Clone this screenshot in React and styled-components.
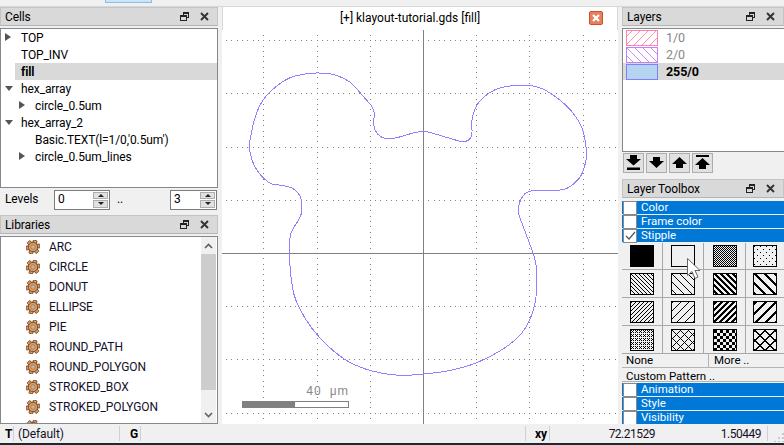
import React from 'react';
import styled, { createGlobalStyle } from 'styled-components';

const Global = createGlobalStyle`
  html, body { margin: 0; padding: 0; background: #f0f0f0; overflow: hidden; }
  * { box-sizing: border-box; }
  body { font-family: Roboto, "Noto Sans", sans-serif; font-size: 12px; letter-spacing: -0.1px; line-height: 15px; color: #000; }
`;

const Page = styled.div`
  width: 784px;
  height: 445px;
  display: flex;
  flex-direction: column;
  background: #f0f0f0;
  border-bottom: 2px solid #1c2a30;
`;

const TopStrip = styled.div`
  height: 7px;
  flex: none;
  padding-left: 105px;
  border-bottom: 1px solid #d8d8d8;
`;

const TopButton = styled.div`
  width: 47px;
  height: 3px;
  background: #cce4f7;
  border: 1px solid #8cbce8;
  border-top: 0;
`;

const Main = styled.div`
  flex: 1;
  min-height: 0;
  display: grid;
  grid-template-columns: 218px 396px 162px;
  column-gap: 4px;
`;

const Column = styled.div`
  display: flex;
  flex-direction: column;
  min-height: 0;
`;

const DockTitle = styled.div`
  height: 19px;
  flex: none;
  display: flex;
  align-items: center;
  padding: 0 8px 0 4px;
  background: #d9d9d9;
  border: 1px solid #c4c4c4;
  border-bottom-color: #b4b4b4;
  span { flex: 1; line-height: 17px; padding-top: 2px; }
  svg { display: block; margin-left: 11px; }
`;

const FloatIcon = () => (
  <svg width="9" height="9" viewBox="0 0 9 9" shapeRendering="crispEdges">
    <path d="M3 .5h5.500v5H6.500M3 .5v2M3 1.500h5.500" fill="none" stroke="#222" />
    <path d="M.5 3h6v5.500h-6zM.5 4h6" fill="none" stroke="#222" />
  </svg>
);

const CloseIcon = () => (
  <svg width="9" height="9" viewBox="0 0 9 9">
    <path d="M1 1l7 7M8 1l-7 7" stroke="#333" strokeWidth="1.9" />
  </svg>
);

const Dock = ({ title }) => (
  <DockTitle>
    <span>{title}</span>
    <FloatIcon />
    <CloseIcon />
  </DockTitle>
);

const TreeBox = styled.div`
  height: 160px;
  flex: none;
  margin-top: 2px;
  background: #fff;
  border: 1px solid #828790;
`;

const TreeRow = styled.div`
  height: 17px;
  display: flex;
  align-items: center;
  position: relative;
  padding-top: 1px;
  padding-left: ${p => 20 + p.$depth * 14}px;
  font-weight: ${p => (p.$selected ? 700 : 400)};
  background: ${p =>
    p.$selected ? 'linear-gradient(90deg, #fff 14px, #d9d9d9 14px)' : 'transparent'};
`;

const Arrow = styled.i`
  position: absolute;
  left: ${p => 4 + p.$depth * 14}px;
  top: ${p => (p.$open ? 6 : 4)}px;
  width: 0;
  height: 0;
  border-style: solid;
  border-color: transparent;
  ${p =>
    p.$open
      ? 'border-width: 5px 4px 0 4px; border-top-color: #555;'
      : 'border-width: 4px 0 4px 6px; border-left-color: #555;'}
`;

const cells = [
  { name: 'TOP', depth: 0, arrow: 'closed' },
  { name: 'TOP_INV', depth: 0 },
  { name: 'fill', depth: 0, selected: true },
  { name: 'hex_array', depth: 0, arrow: 'open' },
  { name: 'circle_0.5um', depth: 1, arrow: 'closed' },
  { name: 'hex_array_2', depth: 0, arrow: 'open' },
  { name: "Basic.TEXT(l=1/0,'0.5um')", depth: 1 },
  { name: 'circle_0.5um_lines', depth: 1, arrow: 'closed' },
];

const LevelsRow = styled.div`
  height: 21px;
  flex: none;
  margin-top: 1px;
  display: flex;
  align-items: center;
  padding-left: 5px;
`;

const LevelsLabel = styled.span`
  width: 49px;
`;

const DotDot = styled.span`
  width: 60px;
  padding-left: 7px;
`;

const Spin = styled.div`
  width: ${p => p.$w}px;
  height: 20px;
  display: flex;
  align-items: center;
  justify-content: space-between;
  background: #fff;
  border: 1px solid #7a7a7a;
  padding: 1px 1px 1px 3px;
`;

const SpinButtons = styled.div`
  width: 15px;
  height: 16px;
  display: flex;
  flex-direction: column;
  gap: 1px;
`;

const SpinButton = styled.div`
  flex: 1;
  background: #e1e1e1;
  border: 1px solid #adadad;
  display: flex;
  align-items: center;
  justify-content: center;
  &::after {
    content: '';
    border-style: solid;
    border-color: transparent;
    border-width: ${p => (p.$up ? '0 3px 3px 3px' : '3px 3px 0 3px')};
    ${p => (p.$up ? 'border-bottom-color: #222;' : 'border-top-color: #222;')}
  }
`;

const SpinBox = ({ value, w }) => (
  <Spin $w={w}>
    {value}
    <SpinButtons>
      <SpinButton $up />
      <SpinButton />
    </SpinButtons>
  </Spin>
);

const LibraryBox = styled.div`
  flex: 1;
  min-height: 0;
  margin-top: 2px;
  display: flex;
  background: #fff;
  border: 1px solid #828790;
  overflow: hidden;
`;

const LibraryList = styled.div`
  flex: 1;
  overflow: hidden;
`;

const LibraryRow = styled.div`
  height: 20px;
  flex: none;
  display: flex;
  align-items: center;
  gap: 9px;
  padding-left: 25px;
  color: #14102a;
  span { padding-top: 1px; }
`;

const Scrollbar = styled.div`
  width: 15px;
  flex: none;
  margin-right: 1px;
  display: flex;
  flex-direction: column;
  background: #f0f0f0;
`;

const ScrollArrow = styled.div`
  height: 17px;
  flex: none;
  display: flex;
  align-items: center;
  justify-content: center;
  &:last-child { margin-top: auto; }
`;

const ScrollThumb = styled.div`
  height: 136px;
  flex: none;
  background: #cdcdcd;
`;

const Chevron = ({ up }) => (
  <svg width="9" height="6" viewBox="0 0 9 6">
    <path d={up ? 'M1 5l3.500-3.500L8 5' : 'M1 1l3.500 3.500L8 1'} fill="none" stroke="#606060" strokeWidth="1.6" />
  </svg>
);

const Gear = () => (
  <svg width="14" height="14" viewBox="-7 -7 14 14">
    {[0, 60, 120, 180, 240, 300].map(a => (
      <rect key={a} x="-1.9" y="-7" width="3.8" height="3.6" rx=".5" fill="#e99a50" stroke="#5b4030" strokeWidth=".8" transform={`rotate(${a + 20})`} />
    ))}
    <circle r="4.7" fill="#e99a50" stroke="#5b4030" strokeWidth=".8" />
    <circle r="2.3" fill="#b9b3aa" stroke="#8a6a4a" strokeWidth=".6" />
  </svg>
);

const libraries = [
  'ARC', 'CIRCLE', 'DONUT', 'ELLIPSE', 'PIE', 'ROUND_PATH',
  'ROUND_POLYGON', 'STROKED_BOX', 'STROKED_POLYGON', '',
];

/* center view */
const ViewHead = styled.div`
  height: 23px;
  flex: none;
  display: flex;
  align-items: center;
  justify-content: center;
  position: relative;
  padding-right: 20px;
  background: #fff;
  border-left: 1px solid #d8d8d8;
  border-right: 1px solid #d8d8d8;
  letter-spacing: 0;
`;

const ViewClose = styled.div`
  position: absolute;
  right: 14px;
  top: 4px;
  width: 14px;
  height: 14px;
  display: flex;
  align-items: center;
  justify-content: center;
  background: #e5805c;
  border: 1px solid #d84a32;
  border-radius: 2px;
`;

const Canvas = styled.div`
  flex: 1;
  min-height: 0;
  position: relative;
  background: #fff;
  svg { display: block; }
`;

const Scale = styled.div`
  position: absolute;
  left: 20px;
  top: 353px;
  width: 107px;
  color: #888;
  letter-spacing: 1px;
  text-align: right;
  line-height: 17px;
`;

const ScaleTrack = styled.div`
  height: 7px;
  margin-top: 1px;
  background: linear-gradient(90deg, #808080 50%, #fff 50%);
  border: 1px solid #808080;
`;

// outline traced from the picture, 3x page coordinates
const outline = [
  [238, 640], [238, 600], [225, 575], [205, 562], [180, 556], [150, 552], [125, 535], [105, 510], [90, 480],
  [82, 440], [88, 400], [100, 350], [120, 305], [150, 270], [200, 235], [250, 222], [290, 219], [340, 225],
  [385, 247], [420, 285], [450, 320], [457, 340], [455, 375], [465, 400], [485, 414], [520, 414], [570, 400],
  [605, 394], [640, 402], [690, 417], [725, 425], [745, 415], [750, 395], [750, 360], [765, 315], [800, 280],
  [840, 262], [900, 256], [950, 262], [1000, 290], [1050, 335], [1080, 385], [1092, 440], [1092, 480],
  [1075, 530], [1035, 565], [1000, 571], [935, 572], [910, 580], [892, 610], [890, 640], [902, 675],
  [915, 710], [935, 765], [944, 810], [942, 890], [925, 955], [890, 1010], [830, 1055], [760, 1090],
  [680, 1112], [605, 1122], [530, 1126], [450, 1113], [380, 1085], [320, 1040], [270, 985], [235, 930],
  [215, 880], [205, 810], [202, 740], [207, 700], [228, 662],
].map(([x, y]) => [x / 3, y / 3 - 30]);

const smoothPath = pts => {
  const n = pts.length;
  let d = `M${pts[0][0]} ${pts[0][1]}`;
  for (let i = 0; i < n; i++) {
    const p0 = pts[(i - 1 + n) % n];
    const p1 = pts[i];
    const p2 = pts[(i + 1) % n];
    const p3 = pts[(i + 2) % n];
    d += `C${p1[0] + (p2[0] - p0[0]) / 6} ${p1[1] + (p2[1] - p0[1]) / 6} ${p2[0] - (p3[0] - p1[0]) / 6} ${p2[1] - (p3[1] - p1[1]) / 6} ${p2[0]} ${p2[1]}`;
  }
  return d + 'Z';
};

const gridDots = () => {
  const ox = 201;
  const oy = 223;
  const step = 53.2;
  const sub = step / 10;
  let d = '';
  const dot = (x, y) => {
    if (x < 3 || x > 393 || y < 2 || y > 392) return;
    d += `M${Math.round(x)} ${Math.round(y)}h1v1h-1z`;
  };
  for (let k = -5; k <= 5; k++) {
    if (k === 0) continue;
    for (let i = -45; i <= 45; i++) {
      dot(ox + k * step, oy + i * sub); // vertical lines
      if (i !== 0) dot(ox + i * sub, oy + k * step); // horizontal lines
    }
  }
  return d;
};

/* layers */
const LayerBox = styled.div`
  height: 124px;
  flex: none;
  margin-top: 2px;
  background: #fff;
  border: 1px solid #828790;
  border-right: 0;
`;

const LayerRow = styled.div`
  height: 17px;
  display: flex;
  align-items: center;
  padding-left: 3px;
  gap: 8px;
  font-size: 12.5px;
  font-weight: ${p => (p.$selected ? 700 : 400)};
  color: ${p => (p.$selected ? '#000' : '#888')};
  background: ${p => (p.$selected ? '#d9d9d9' : 'transparent')};
`;

const LayerSwatch = styled.svg`
  display: block;
  flex: none;
`;

const hatch = (dir, step) => {
  let d = '';
  for (let i = -16; i < 34; i += step) {
    d += dir > 0 ? `M${i} 15L${i + 15} 0` : `M${i} 0L${i + 15} 15`;
  }
  return d;
};

const LayerSwatchIcon = ({ color, fill, dir }) => (
  <LayerSwatch width="32" height="16" viewBox="0 0 32 16">
    <defs>
      <clipPath id={`sw${color.slice(1)}`}><rect x="1" y="1" width="30" height="14" /></clipPath>
    </defs>
    <rect x=".5" y=".5" width="31" height="15" fill={fill || '#fff'} stroke={color} />
    {dir ? <path d={hatch(dir, 8)} stroke={color} fill="none" strokeWidth=".9" clipPath={`url(#sw${color.slice(1)})`} /> : null}
  </LayerSwatch>
);

const MoveBar = styled.div`
  height: 20px;
  flex: none;
  margin-top: 1px;
  display: flex;
  gap: 2px;
  padding-left: 1px;
`;

const MoveButton = styled.div`
  width: 21px;
  height: 20px;
  display: flex;
  align-items: center;
  justify-content: center;
  background: #e1e1e1;
  border: 1px solid #adadad;
`;

const moves = [
  'M5 0h7v4h4l-7.500 6.500L1 4h4zM2 12.500h13v2.500H2z',
  'M5 2h7v4h4l-7.500 7L1 6h4z',
  'M8.500 2L16 9h-4v4H5V9H1z',
  'M2 0h13v2H2zM8.500 3L16 10h-4v4H5v-4H1z',
];

const Spacer = styled.div`
  height: ${p => p.$h}px;
  flex: none;
`;

const Band = styled.div`
  height: 13px;
  flex: none;
  margin-top: 1px;
  display: flex;
  align-items: center;
  background: #0078d7;
  color: #fff;
  font-size: 11.5px;
  letter-spacing: 0;
  line-height: 12px;
`;

const BandLabel = styled.span`
  margin-top: -2px;
`;

const BandCheck = styled.div`
  width: 14px;
  height: 14px;
  flex: none;
  margin: 0 4px 0 1px;
  background: #fff;
  border: 1px solid #8a8a8a;
  display: flex;
  align-items: center;
  justify-content: center;
`;

const StippleGrid = styled.div`
  flex: none;
  display: grid;
  grid-template-columns: 41px 41px 42px 38px;
  grid-template-rows: 27px repeat(3, 28px);
  position: relative;
  margin-top: 1px;
`;

const StippleCell = styled.div`
  display: flex;
  align-items: center;
  justify-content: center;
  border-right: 1px solid #a8a8a8;
  border-bottom: 1px solid #a8a8a8;
  &:nth-child(4n) { border-right: 0; }
`;

const StippleSwatch = styled.svg`
  display: block;
`;

const Pointer = styled.svg`
  position: absolute;
  left: 65px;
  top: 15px;
`;

const mod = (a, b) => ((a % b) + b) % b;

const stipples = [
  () => true,
  () => false,
  (x, y) => (x + y) % 2 === 0,
  (x, y) => (x % 6 === 0 && y % 6 === 0) || (x % 6 === 3 && y % 6 === 3),
  (x, y) => mod(x - y, 4) === 0,
  (x, y) => mod(x - y, 8) === 0,
  (x, y) => mod(x - y, 6) < 3,
  (x, y) => mod(x - y, 10) < 3,
  (x, y) => mod(x + y, 4) === 0,
  (x, y) => mod(x + y, 8) === 0,
  (x, y) => mod(x + y, 6) < 3,
  (x, y) => mod(x + y, 10) < 3,
  (x, y) => (x % 2 === 0 && y % 2 === 0) || (x % 4 === 1 && y % 4 === 1),
  (x, y) => mod(x + y, 8) === 0 || mod(x - y, 8) === 0,
  (x, y) => (Math.floor(x / 3) + Math.floor(y / 3)) % 2 === 0,
  (x, y) => mod(x + y, 10) < 2 || mod(x - y, 10) < 2,
];

const stipplePath = fn => {
  let d = '';
  for (let y = 0; y < 20; y++) {
    for (let x = 0; x < 22; x++) {
      if (fn(x, y)) d += `M${x + 1} ${y + 1}h1v1h-1z`;
    }
  }
  return d;
};

const PatternRow = styled.div`
  height: 14px;
  flex: none;
  display: grid;
  grid-template-columns: ${p => p.$cols};
  align-items: center;
  padding-left: 4px;
  padding-top: ${p => p.$nudge || 0}px;
  font-size: 11.5px;
  letter-spacing: 0;
  line-height: 13px;
  border-bottom: 1px solid #b4b4b4;
  span + span { padding-left: 5px; border-left: 1px solid #b4b4b4; height: 100%; }
`;

/* status bar */
const StatusBar = styled.div`
  height: 19px;
  flex: none;
  display: flex;
  align-items: center;
  position: relative;
  background: #f0f0f0;
`;

const StatusCell = styled.div`
  width: ${p => p.$w}px;
  height: 15px;
  flex: none;
  display: flex;
  align-items: center;
  justify-content: ${p => (p.$right ? 'flex-end' : 'flex-start')};
  padding-left: ${p => p.$pad || 0}px;
  padding-top: 2px;
  font-weight: ${p => (p.$bold ? 700 : 400)};
  letter-spacing: ${p => (p.$right ? '-0.5px' : '-0.1px')};
  border-right: ${p => (p.$line ? '1px solid #d0d0d0' : '0')};
  color: ${p => (p.$bold ? '#000' : '#14102a')};
`;

const Grip = styled.svg`
  position: absolute;
  right: 0;
  bottom: 1px;
`;

const App = () => (
  <Page>
    <Global />
    <TopStrip><TopButton /></TopStrip>
    <Main>
      <Column>
        <Dock title="Cells" />
        <TreeBox>
          {cells.map(c => (
            <TreeRow key={c.name} $depth={c.depth} $selected={c.selected}>
              {c.arrow ? <Arrow $depth={c.depth} $open={c.arrow === 'open'} /> : null}
              {c.name}
            </TreeRow>
          ))}
        </TreeBox>
        <LevelsRow>
          <LevelsLabel>Levels</LevelsLabel>
          <SpinBox value="0" w={56} />
          <DotDot>..</DotDot>
          <SpinBox value="3" w={47} />
        </LevelsRow>
        <Spacer $h={5} />
        <Dock title="Libraries" />
        <LibraryBox>
          <LibraryList>
            {libraries.map((l, i) => (
              <LibraryRow key={i}><Gear /><span>{l}</span></LibraryRow>
            ))}
          </LibraryList>
          <Scrollbar>
            <ScrollArrow><Chevron up /></ScrollArrow>
            <ScrollThumb />
            <ScrollArrow><Chevron /></ScrollArrow>
          </Scrollbar>
        </LibraryBox>
      </Column>

      <Column>
        <ViewHead>
          [+] klayout-tutorial.gds [fill]
          <ViewClose>
            <svg width="8" height="8" viewBox="0 0 8 8">
              <path d="M1 1l6 6M7 1l-6 6" stroke="#fff" strokeWidth="2.2" />
            </svg>
          </ViewClose>
        </ViewHead>
        <Canvas>
          <svg width="396" height="394" viewBox="0 0 396 394">
            <path d={gridDots()} fill="#808080" shapeRendering="crispEdges" />
            <path d="M0 223.500H396M201.500 0V394" stroke="#808080" fill="none" shapeRendering="crispEdges" />
            <path d={smoothPath(outline)} stroke="#8f80ff" fill="none" strokeWidth="1" shapeRendering="crispEdges" />
          </svg>
          <Scale>
            40&nbsp;&nbsp;μm
            <ScaleTrack />
          </Scale>
        </Canvas>
      </Column>

      <Column>
        <Dock title="Layers" />
        <LayerBox>
          <LayerRow>
            <LayerSwatchIcon color="#ff80a8" dir={1} />1/0
          </LayerRow>
          <LayerRow>
            <LayerSwatchIcon color="#c080ff" dir={-1} />2/0
          </LayerRow>
          <LayerRow $selected>
            <LayerSwatchIcon color="#8080ff" fill="#b4d4f2" />255/0
          </LayerRow>
        </LayerBox>
        <MoveBar>
          {moves.map(d => (
            <MoveButton key={d}>
              <svg width="17" height="16" viewBox="0 0 17 16"><path d={d} fill="#000" /></svg>
            </MoveButton>
          ))}
        </MoveBar>
        <Spacer $h={6} />
        <Dock title="Layer Toolbox" />
        <Spacer $h={2} />
        <Band><BandCheck /><BandLabel>Color</BandLabel></Band>
        <Band><BandCheck /><BandLabel>Frame color</BandLabel></Band>
        <Band>
          <BandCheck>
            <svg width="11" height="10" viewBox="0 0 11 10">
              <path d="M1 5l3 3 6-7" fill="none" stroke="#555" strokeWidth="1.2" />
            </svg>
          </BandCheck>
          <BandLabel>Stipple</BandLabel>
        </Band>
        <StippleGrid>
          {stipples.map((fn, i) => (
            <StippleCell key={i}>
              <StippleSwatch width="24" height="22" viewBox="0 0 24 22" shapeRendering="crispEdges">
                <rect x="0" y="0" width="24" height="22" fill="#000" />
                <rect x="1" y="1" width="22" height="20" fill="#f0f0f0" />
                <path d={stipplePath(fn)} fill="#000" />
              </StippleSwatch>
            </StippleCell>
          ))}
          <Pointer width="14" height="21" viewBox="0 0 14 21">
            <path d="M.5.500L13 12.500H8l3 6.500-3 1.500-3-7L.5 17.500z" fill="#fff" stroke="#666" />
          </Pointer>
        </StippleGrid>
        <PatternRow $cols="82px 80px">
          <span>None</span>
          <span>More ..</span>
        </PatternRow>
        <PatternRow $cols="1fr" $nudge={2}>
          <span>Custom Pattern ..</span>
        </PatternRow>
        <Band><BandCheck /><BandLabel>Animation</BandLabel></Band>
        <Band><BandCheck /><BandLabel>Style</BandLabel></Band>
        <Band><BandCheck /><BandLabel>Visibility</BandLabel></Band>
      </Column>
    </Main>
    <StatusBar>
      <StatusCell $w={14} $pad={5} $bold $line>T</StatusCell>
      <StatusCell $w={106} $pad={4} $line>(Default)</StatusCell>
      <StatusCell $w={21} $pad={10} $bold $line>G</StatusCell>
      <StatusCell $w={385} $line />
      <StatusCell $w={24} $pad={9} $bold $line>xy</StatusCell>
      <StatusCell $w={105} $right>72.21529</StatusCell>
      <StatusCell $w={106} $right>1.50449</StatusCell>
      <StatusCell $w={7} $line />
      <Grip width="10" height="10" viewBox="0 0 10 10">
        <path d="M8 1h2v2H8zM4 5h2v2H4zM8 5h2v2H8zM0 9h2v1H0zM4 9h2v1H4zM8 9h2v1H8z" fill="#c8c8c8" />
      </Grip>
    </StatusBar>
  </Page>
);

export default App;
